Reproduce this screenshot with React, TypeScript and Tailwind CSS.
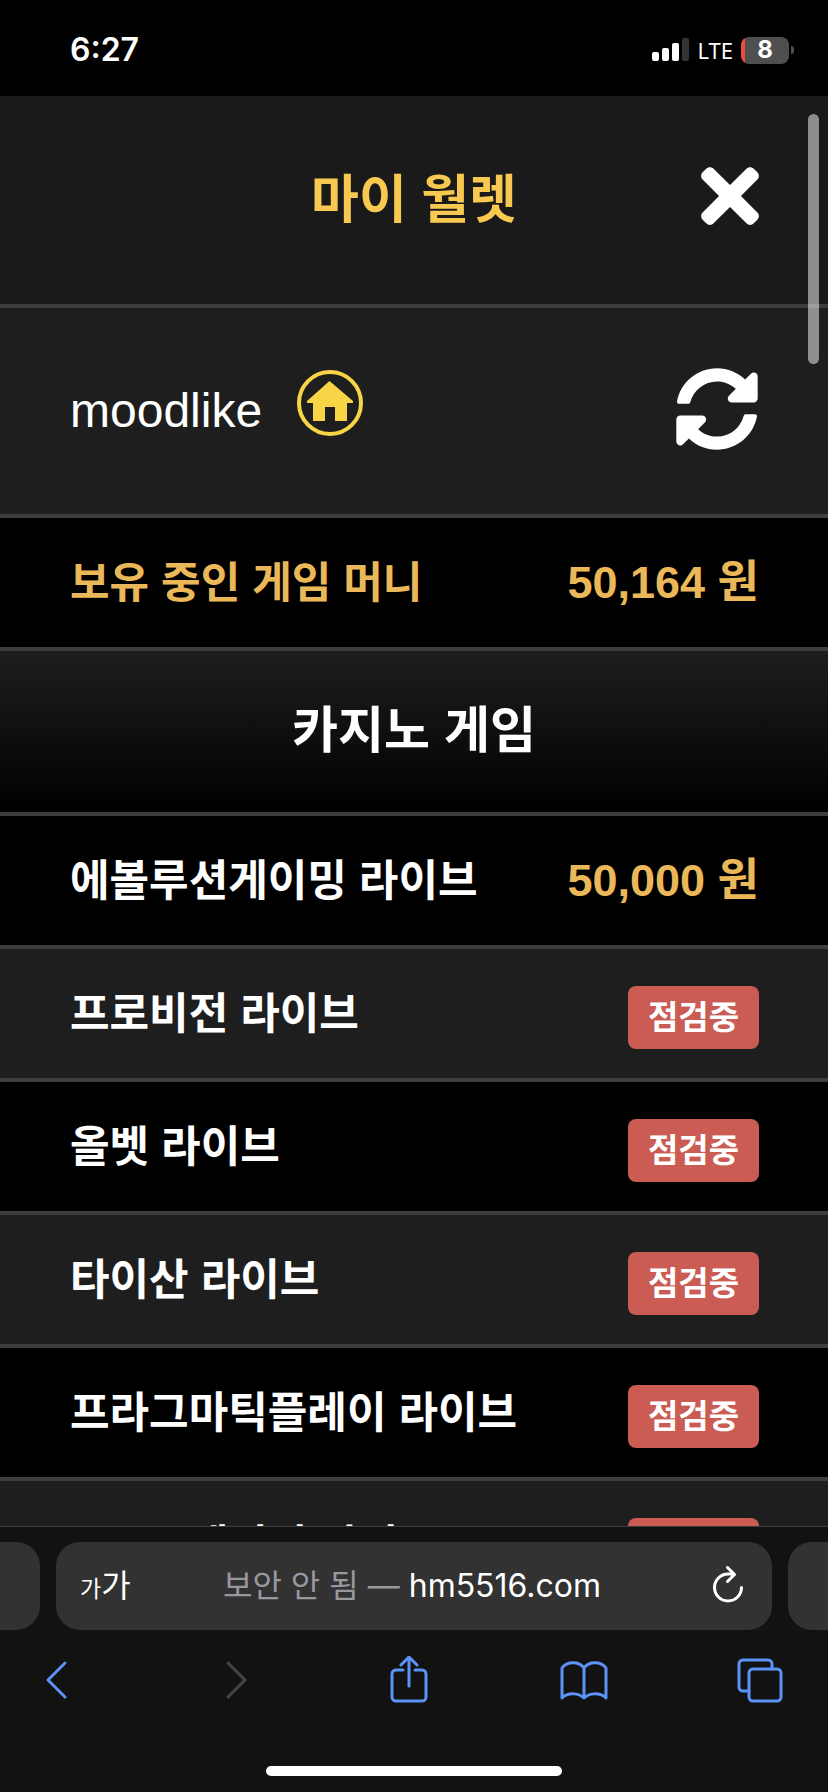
import type { ReactNode } from 'react';
import { FaSyncAlt, FaTimes } from 'react-icons/fa';

const games = [
  { name: '에볼루션게이밍 라이브', amount: '50,000 원' },
  { name: '프로비전 라이브' },
  { name: '올벳 라이브' },
  { name: '타이산 라이브' },
  { name: '프라그마틱플레이 라이브' },
  { name: '오푸스게이밍 라이브' },
];

function StatusBar() {
  return (
    <div className="flex h-24 shrink-0 items-center justify-between bg-black pl-[70px] pr-[34px] pt-1 font-['Inter',sans-serif] text-white">
      <span className="text-[32px] leading-10 font-semibold">6:27</span>
      <div className="flex items-center gap-2">
        <svg className="h-6 w-[37px]" viewBox="0 0 37 24" fill="#fff" aria-hidden="true">
          <rect x="0" y="14" width="7" height="9" rx="2" />
          <rect x="10" y="10" width="7" height="13" rx="2" />
          <rect x="20" y="5" width="7" height="18" rx="2" />
          <rect x="30" y="0" width="7" height="23" rx="2" fill="#333" />
        </svg>
        <span className="font-['Noto_Sans',sans-serif] text-[22px] leading-7">LTE</span>
        <div className="flex items-center gap-[2px]">
          <div className="flex h-[27px] w-12 items-center justify-center overflow-hidden rounded-lg bg-linear-to-r from-[#ee4d3c] from-[4px] to-[#4f4f4f] to-[4px]">
            <span className="text-2xl leading-7 font-bold">8</span>
          </div>
          <div className="h-2 w-[3px] rounded-r-full bg-[#4f4f4f]" />
        </div>
      </div>
    </div>
  );
}

function HomeIcon() {
  return (
    <svg className="size-[68px]" viewBox="0 0 68 68" aria-hidden="true">
      <circle cx="34" cy="34" r="31" fill="none" stroke="#f7d547" strokeWidth="4" />
      <path d="M33.500 12 57 32v2h-6v18H39V38H29v14H17V34h-6v-2z" fill="#f7d547" />
    </svg>
  );
}

function Row({ children, dark }: { children: ReactNode; dark: boolean }) {
  return (
    <li
      className={`flex h-[133px] items-center justify-between border-b-4 border-[#3d3d3d] pl-[70px] pr-[69px] ${
        dark ? 'bg-black' : 'bg-[#1e1e1e]'
      }`}
    >
      {children}
    </li>
  );
}

function Wallet() {
  return (
    <main className="relative min-h-0 flex-1 overflow-hidden bg-[#1e1e1e] font-['Liberation_Sans','Noto_Sans_CJK_KR',sans-serif] text-white">
      <header className="grid h-[212px] grid-cols-[1fr_auto_1fr] items-center border-b-4 border-[#3d3d3d] bg-[#1a1a1a] px-[69px]">
        <h1 className="col-start-2 text-[52px] leading-[64px] font-bold text-[#f8c950]">마이 월렛</h1>
        <button type="button" aria-label="닫기" className="mb-2 justify-self-end">
          <FaTimes className="h-[84px] w-[58px]" />
        </button>
      </header>

      <div className="flex h-[210px] items-center justify-between border-b-4 border-[#3d3d3d] pl-[70px] pr-[69px]">
        <div className="flex items-center gap-[34px]">
          <span className="text-5xl leading-[56px]">moodlike</span>
          <a href="#home" aria-label="홈" className="mb-4">
            <HomeIcon />
          </a>
        </div>
        <button type="button" aria-label="새로고침" className="mb-1">
          <FaSyncAlt className="size-[84px]" />
        </button>
      </div>

      <ul>
        <Row dark>
          <span className="text-[43px] leading-[56px] font-bold text-[#ebb859]">보유 중인 게임 머니</span>
          <span className="text-[45px] leading-[56px] font-bold text-[#ebb859]">50,164 원</span>
        </Row>
      </ul>

      <h2 className="flex h-[165px] items-center justify-center border-b-4 border-[#3d3d3d] bg-linear-to-b/srgb from-[#1e1e1e] to-black text-[50px] font-bold">
        카지노 게임
      </h2>

      <ul>
        {games.map((game, i) => (
          <Row key={game.name} dark={i % 2 === 0}>
            <span className="text-[43px] leading-[56px] font-bold">{game.name}</span>
            {game.amount ? (
              <span className="text-[45px] leading-[56px] font-bold text-[#ebb859]">{game.amount}</span>
            ) : (
              <span className="mt-2 flex h-[63px] items-center rounded-lg bg-[#ca5c54] px-5 text-[33px] font-bold">
                점검중
              </span>
            )}
          </Row>
        ))}
      </ul>

      {/* scroll thumb */}
      <div className="absolute top-[18px] right-[9px] h-[250px] w-[11px] rounded-full bg-white/50" />
    </main>
  );
}

function ToolIcon({ children }: { children: ReactNode }) {
  return (
    <svg
      className="size-12"
      viewBox="0 0 48 48"
      fill="none"
      stroke="currentColor"
      strokeWidth="3"
      strokeLinecap="round"
      strokeLinejoin="round"
      aria-hidden="true"
    >
      {children}
    </svg>
  );
}

function BrowserBar() {
  return (
    <footer className="shrink-0 border-t border-[#3d3d3d] bg-[#121212] pt-[15px] pb-4 font-['Inter','Noto_Sans_CJK_KR',sans-serif] text-white">
      <div className="flex h-[88px] gap-4">
        <div className="w-10 rounded-r-3xl bg-[#323232]" />
        <div className="grid flex-1 grid-cols-[1fr_auto_1fr] items-center rounded-3xl bg-[#323232] pl-6 pr-7">
          <button type="button" aria-label="페이지 설정" className="flex items-baseline justify-self-start">
            <span className="text-[23px]">가</span>
            <span className="text-[32px]">가</span>
          </button>
          <div className="text-[32px] leading-10">
            <span className="text-[#98989f]">보안 안 됨 — </span>hm5516.com
          </div>
          <button type="button" aria-label="새로고침" className="justify-self-end">
            <svg
              className="h-10 w-8"
              viewBox="0 0 32 40"
              fill="none"
              stroke="currentColor"
              strokeWidth="3"
              strokeLinecap="round"
              strokeLinejoin="round"
              aria-hidden="true"
            >
              <path d="M29.500 21.500A13.500 13.500 0 1 1 16 8h6M15.500 1.500 22.500 8.500 15.500 15.500" />
            </svg>
          </button>
        </div>
        <div className="w-10 rounded-l-3xl bg-[#323232]" />
      </div>

      <nav className="mt-[26px] flex justify-between pl-8 pr-11 text-[#5b93f7]">
        <button type="button" aria-label="뒤로">
          <ToolIcon>
            <path d="M33 7 16 24l17 17" />
          </ToolIcon>
        </button>
        <button type="button" aria-label="앞으로" disabled className="text-[#454545]">
          <ToolIcon>
            <path d="M20 7l17 17-17 17" />
          </ToolIcon>
        </button>
        <button type="button" aria-label="공유">
          <ToolIcon>
            <path d="M19 14h-7a4 4 0 0 0-4 4v23a4 4 0 0 0 4 4h26a4 4 0 0 0 4-4V18a4 4 0 0 0-4-4h-7M25 30V1.500M17 9l8-8 8 8" />
          </ToolIcon>
        </button>
        <button type="button" aria-label="책갈피">
          <ToolIcon>
            <path d="M24 12C19 5 7 5 2 12v30c6-6 17-5 22 0 5-5 16-6 22 0V12C41 5 29 5 24 12zM24 12v30" />
          </ToolIcon>
        </button>
        <button type="button" aria-label="탭">
          <ToolIcon>
            <path d="M13 35H7a4 4 0 0 1-4-4V8a4 4 0 0 1 4-4h25a4 4 0 0 1 4 4v5" />
            <rect x="13" y="13" width="32" height="32" rx="4" />
          </ToolIcon>
        </button>
      </nav>

      <div className="mx-auto mt-[62px] h-[10px] w-[296px] rounded-full bg-white" />
    </footer>
  );
}

export default function App() {
  return (
    <div className="flex h-screen flex-col overflow-hidden bg-black">
      <StatusBar />
      <Wallet />
      <BrowserBar />
    </div>
  );
}
